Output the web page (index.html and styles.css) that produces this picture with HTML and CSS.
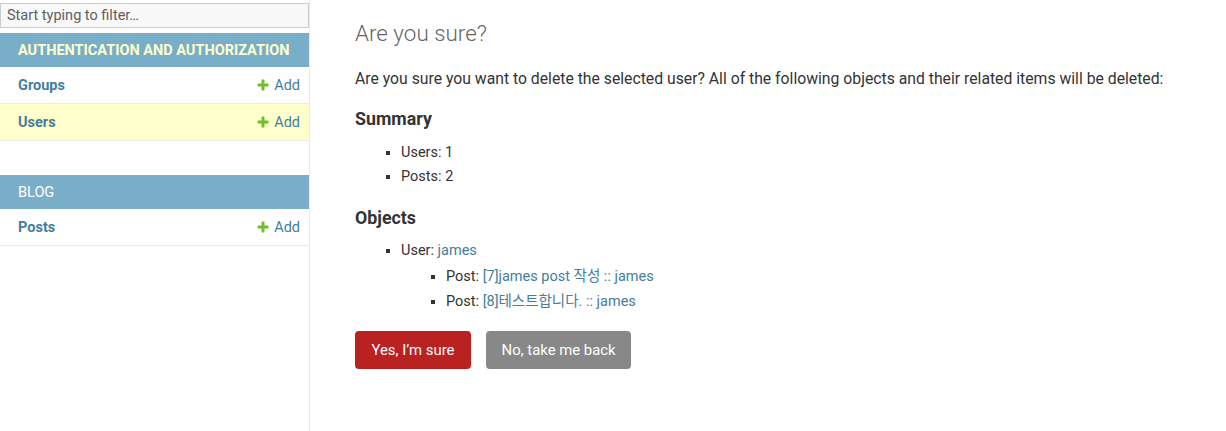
FILE: index.html
```html
<!DOCTYPE html>
<html lang="en">
<head>
<meta charset="utf-8">
<title>Are you sure?</title>
<link rel="stylesheet" href="styles.css">
</head>
<body>
<div class="page">
  <nav class="sidebar">
    <input class="nav-filter" type="search" placeholder="Start typing to filter…">
    <div class="module current-app">
      <div class="caption">AUTHENTICATION AND AUTHORIZATION</div>
      <div class="row">
        <a class="model" href="#">Groups</a>
        <a class="addlink" href="#"><svg class="plus" viewBox="0 0 1792 1792" width="14" height="14"><path fill="#70bf2b" d="M1600 796v192q0 40-28 68t-68 28h-416v416q0 40-28 68t-68 28h-192q-40 0-68-28t-28-68v-416h-416q-40 0-68-28t-28-68v-192q0-40 28-68t68-28h416v-416q0-40 28-68t68-28h192q40 0 68 28t28 68v416h416q40 0 68 28t28 68z"/></svg>Add</a>
      </div>
      <div class="row selected">
        <a class="model" href="#">Users</a>
        <a class="addlink" href="#"><svg class="plus" viewBox="0 0 1792 1792" width="14" height="14"><path fill="#70bf2b" d="M1600 796v192q0 40-28 68t-68 28h-416v416q0 40-28 68t-68 28h-192q-40 0-68-28t-28-68v-416h-416q-40 0-68-28t-28-68v-192q0-40 28-68t68-28h416v-416q0-40 28-68t68-28h192q40 0 68 28t28 68v416h416q40 0 68 28t28 68z"/></svg>Add</a>
      </div>
    </div>
    <div class="module">
      <div class="caption">BLOG</div>
      <div class="row">
        <a class="model" href="#">Posts</a>
        <a class="addlink" href="#"><svg class="plus" viewBox="0 0 1792 1792" width="14" height="14"><path fill="#70bf2b" d="M1600 796v192q0 40-28 68t-68 28h-416v416q0 40-28 68t-68 28h-192q-40 0-68-28t-28-68v-416h-416q-40 0-68-28t-28-68v-192q0-40 28-68t68-28h416v-416q0-40 28-68t68-28h192q40 0 68 28t28 68v416h416q40 0 68 28t28 68z"/></svg>Add</a>
      </div>
    </div>
  </nav>
  <main class="content">
    <h1>Are you sure?</h1>
    <p>Are you sure you want to delete the selected user? All of the following objects and their related items will be deleted:</p>
    <h2 class="summary-title">Summary</h2>
    <ul class="list summary">
      <li>Users: 1</li>
      <li>Posts: 2</li>
    </ul>
    <h2 class="objects">Objects</h2>
    <ul class="list objects-list">
      <li>User: <a href="#">james</a>
        <ul class="sublist">
          <li>Post: <a href="#">[7]james post 작성 :: james</a></li>
          <li>Post: <a href="#">[8]테스트합니다. :: james</a></li>
        </ul>
      </li>
    </ul>
    <form class="actions">
      <button type="button" class="btn btn-danger">Yes, I’m sure</button>
      <a href="#" class="btn btn-cancel">No, take me back</a>
    </form>
  </main>
</div>
</body>
</html>
```
FILE: styles.css
```css
html, body {
  margin: 0;
  padding: 0;
  background: #fff;
}
body {
  font-family: Roboto, "Noto Sans CJK KR", "Liberation Sans", sans-serif;
  color: #333;
  font-size: 14.3px;
}
a {
  color: #447e9b;
  text-decoration: none;
}
.page {
  display: flex;
  min-height: 431px;
}
.sidebar {
  flex: 0 0 309px;
  border-right: 1px solid #eaeaea;
}
.nav-filter {
  display: block;
  width: 309px;
  box-sizing: border-box;
  height: 25px;
  margin: 3px 0 5px 0;
  padding: 2px 6px;
  border: 1px solid #ccc;
  background: #f8f8f8;
  font-family: Roboto, sans-serif;
  font-size: 14.5px;
  color: #333;
  outline: none;
}
.nav-filter::placeholder {
  color: #5f5f5f;
}
.module {
  margin-bottom: 34px;
}
.caption {
  background: #79aec8;
  color: #fff;
  font-size: 14.5px;
  line-height: 16px;
  padding: 10px 17px 8px 18px;
}
.current-app .caption {
  color: #ffc;
  font-weight: bold;
}
.row {
  display: flex;
  justify-content: space-between;
  align-items: center;
  height: 36px;
  padding: 0 9px 0 18px;
  border-bottom: 1px solid #eaeaea;
}
.row.selected {
  background: #ffc;
}
.model {
  font-weight: bold;
  font-size: 14.5px;
}
.addlink {
  display: flex;
  align-items: center;
  font-size: 14.5px;
}
.plus {
  margin-right: 4px;
}
.content {
  flex: 1;
  padding: 20px 44px 20px 45px;
}
h1 {
  margin: 0 0 22px 0;
  font-size: 22.4px;
  line-height: 26px;
  font-weight: 300;
  color: #666;
}
p {
  margin: 0 0 18px 0;
  font-size: 15.75px;
  line-height: 22px;
}
h2 {
  margin: 0 0 10px 0;
  font-size: 17.8px;
  line-height: 22px;
  font-weight: bold;
  color: #333;
}
h2.summary-title {
  margin-bottom: 11px;
}
.list {
  margin: 0 0 19px 0;
  padding-left: 46px;
}
.list.summary {
  margin-bottom: 18px;
}
.list.objects-list {
  margin-bottom: 16px;
}
.list li {
  list-style-type: square;
  line-height: 22px;
  padding: 1.1px 0;
  font-size: 14.5px;
}
.sublist {
  margin: 2px 0 0 0;
  padding-left: 45px;
}
.sublist li + li {
  padding-top: 2px;
}
.actions {
  display: flex;
  gap: 15px;
  margin: 0;
}
.btn {
  display: inline-block;
  box-sizing: border-box;
  height: 38px;
  padding: 0 16.5px;
  line-height: 38px;
  border: none;
  border-radius: 4px;
  color: #fff;
  font-family: Roboto, sans-serif;
  font-size: 14.9px;
}
.btn-danger {
  background: #ba2121;
}
.btn-cancel {
  background: #888;
  padding: 0 15.5px;
}
```
